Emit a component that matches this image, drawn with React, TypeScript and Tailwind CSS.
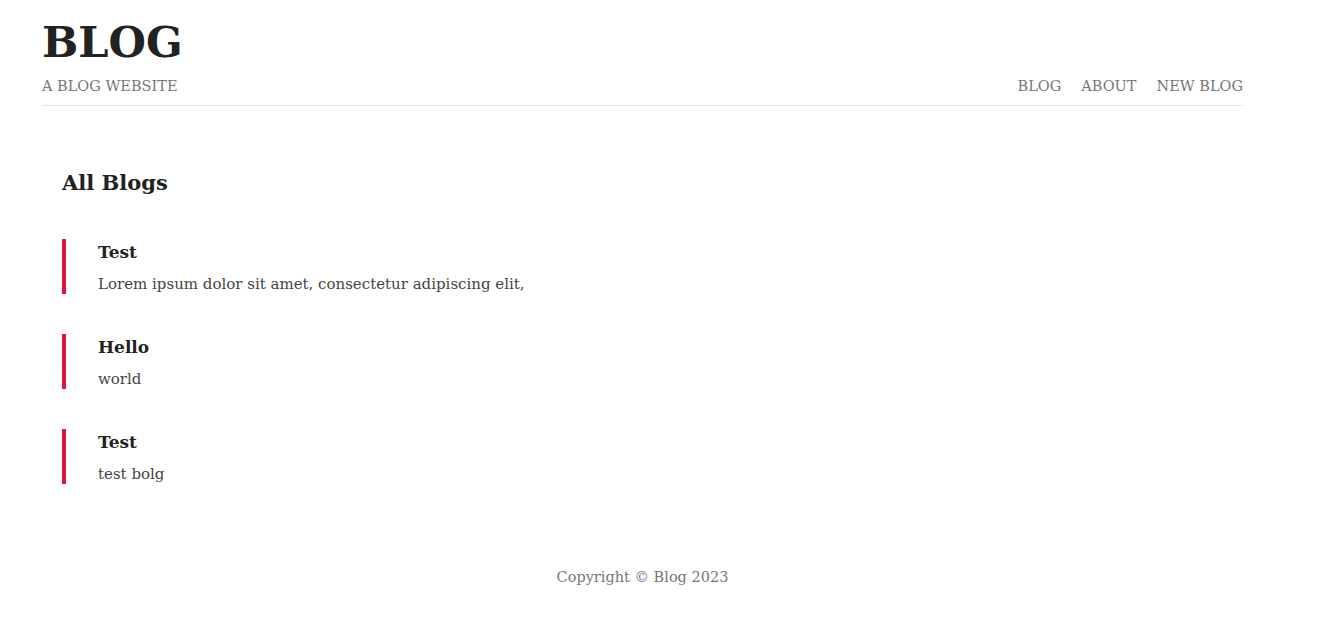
const blogs = [
  { title: "Test", body: "Lorem ipsum dolor sit amet, consectetur adipiscing elit," },
  { title: "Hello", body: "world" },
  { title: "Test", body: "test bolg" },
];

export default function App() {
  return (
    <div className="min-h-[630px] bg-white font-['DejaVu_Serif',serif] text-[#222]">
      <div className="ml-[42px] w-[1201px]">
        <header className="flex items-end justify-between border-b border-[#e5e5e5] pt-[14px] pb-[9px]">
          <div>
            <h1 className="text-[43px] font-bold leading-[56px] text-[#222]">BLOG</h1>
            <p className="mt-[6px] text-[14.5px] leading-[20px] text-[#777]">A BLOG WEBSITE</p>
          </div>
          <nav className="flex gap-5 text-[14.5px] leading-[20px] text-[#777]">
            <a href="#">BLOG</a>
            <a href="#">ABOUT</a>
            <a href="#">NEW BLOG</a>
          </nav>
        </header>

        <main className="px-5 pt-[61px]">
          <h2 className="text-[21px] font-bold leading-[32px]">All Blogs</h2>
          <div className="mt-[40px] flex flex-col gap-[40px]">
            {blogs.map((b, i) => (
              <div key={i} className="border-l-4 border-[#dc143c] pl-8 pt-[1px]">
                <h3 className="text-[17px] font-bold leading-[24px]">{b.title}</h3>
                <p className="mt-[10px] text-[15px] leading-[20px] text-[#444]">{b.body}</p>
              </div>
            ))}
          </div>
        </main>

        <footer className="pt-[81px] text-center text-[14.5px] leading-[24px] text-[#777]">
          Copyright © Blog 2023
        </footer>
      </div>
    </div>
  );
}
